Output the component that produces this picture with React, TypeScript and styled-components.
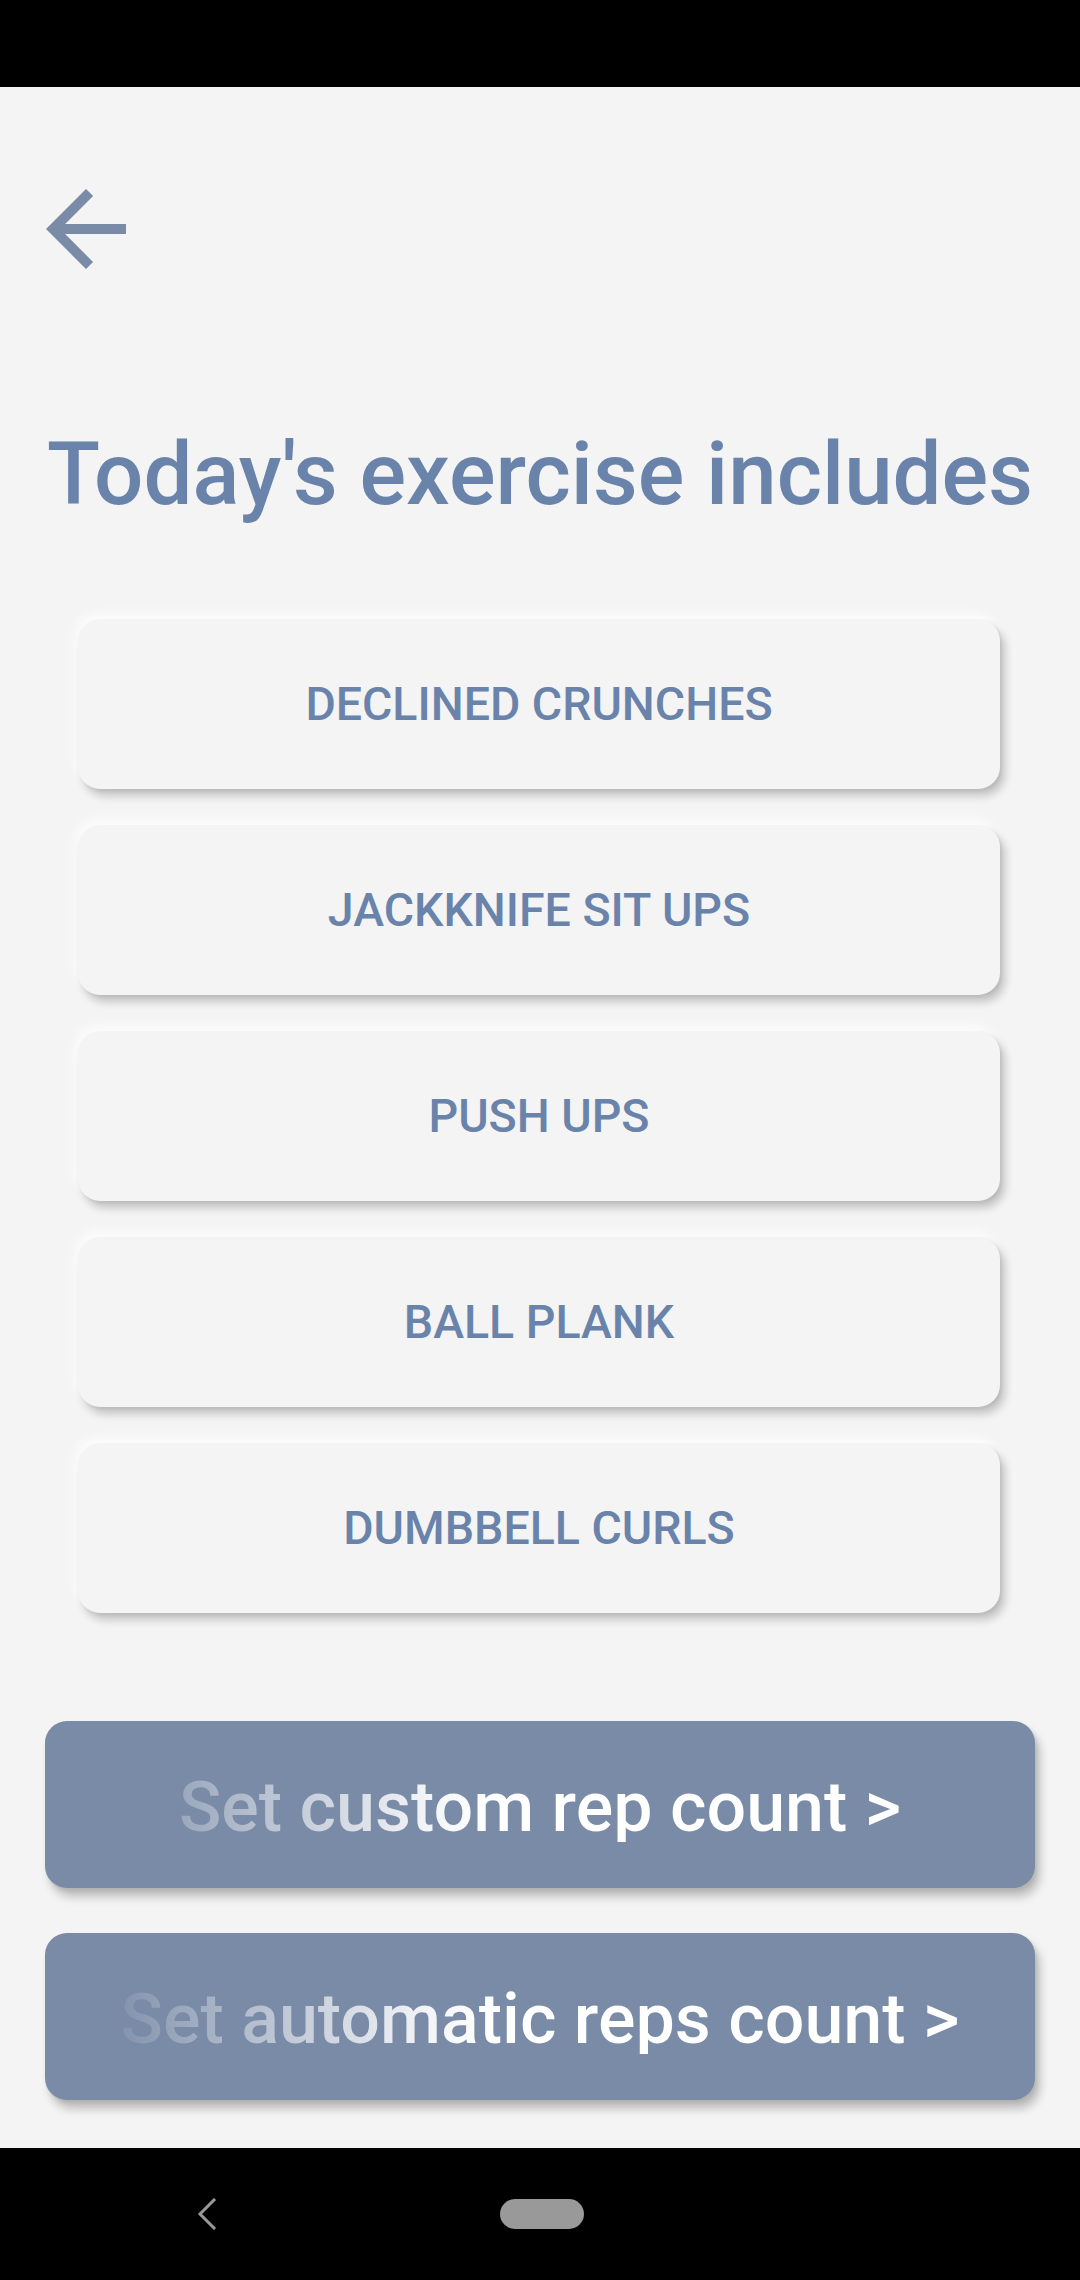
import React from "react";
import styled, { createGlobalStyle } from "styled-components";

const GlobalStyle = createGlobalStyle`
  html, body {
    margin: 0;
    padding: 0;
    background: #000;
  }
  * { box-sizing: border-box; }
  body {
    font-family: Roboto, "Noto Sans", "Liberation Sans", sans-serif;
  }
`;

const Screen = styled.div`
  width: 1080px;
  height: 2280px;
  display: flex;
  flex-direction: column;
  background: #f4f4f4;
  overflow: hidden;
`;

const StatusBar = styled.div`
  height: 87px;
  flex: none;
  background: #000;
`;

const Main = styled.main`
  flex: 1;
  display: flex;
  flex-direction: column;
  background: #f4f4f4;
`;

const BackButton = styled.button`
  width: 120px;
  height: 120px;
  margin: 82px 0 0 26px;
  padding: 0;
  border: none;
  background: transparent;
  display: flex;
  align-items: center;
  justify-content: center;
  cursor: pointer;
`;

const Title = styled.h1`
  margin: 142px 0 0 47px;
  font-size: 87px;
  line-height: 86px;
  font-weight: 500;
  color: #6983ab;
  white-space: nowrap;
`;

const ExerciseList = styled.ul`
  list-style: none;
  margin: 102px 80px 0 78px;
  padding: 0;
  display: flex;
  flex-direction: column;
  gap: 36px;
`;

const ExerciseCard = styled.li`
  height: 170px;
  border-radius: 22px;
  background: #f4f4f4;
  display: flex;
  align-items: center;
  justify-content: center;
  font-size: 46.5px;
  font-weight: 500;
  color: #6983ab;
  box-shadow: 5px 7px 9px rgba(0, 0, 0, 0.2), 2px 2px 3px rgba(0, 0, 0, 0.06),
    -3px -6px 12px rgba(255, 255, 255, 0.75);
`;

const Actions = styled.div`
  margin: 108px 45px 0 45px;
  display: flex;
  flex-direction: column;
  gap: 45px;
`;

const ActionButton = styled.button`
  height: 167px;
  border: none;
  border-radius: 22px;
  background: #7a8ba7;
  padding: 0;
  display: flex;
  align-items: center;
  cursor: pointer;
  box-shadow: 5px 9px 10px rgba(0, 0, 0, 0.22), 2px 3px 4px rgba(0, 0, 0, 0.08);
`;

const ActionLabel = styled.span`
  display: block;
  width: 100%;
  text-align: center;
  font-family: Roboto, "Noto Sans", "Liberation Sans", sans-serif;
  font-size: 70px;
  font-weight: 500;
  line-height: 1;
  padding-top: 5px;
  color: transparent;
  background: linear-gradient(
    90deg,
    rgba(255, 255, 255, 0) 50px,
    rgba(255, 255, 255, 0.25) 135px,
    rgba(255, 255, 255, 0.6) 265px,
    rgba(255, 255, 255, 0.9) 380px,
    #ffffff 440px
  );
  -webkit-background-clip: text;
  background-clip: text;
`;

const NavBar = styled.nav`
  height: 132px;
  flex: none;
  background: #000;
  display: flex;
  align-items: center;
  padding-left: 197px;
`;

const HomePill = styled.div`
  width: 84px;
  height: 30px;
  border-radius: 15px;
  background: #999999;
  margin-left: 283px;
`;

const exercises = [
  "DECLINED CRUNCHES",
  "JACKKNIFE SIT UPS",
  "PUSH UPS",
  "BALL PLANK",
  "DUMBBELL CURLS",
];

export default function App() {
  return (
    <>
      <GlobalStyle />
      <Screen>
        <StatusBar />
        <Main>
          <BackButton aria-label="Back">
            <svg width="120" height="120" viewBox="0 0 24 24">
              <path
                d="M20 11H7.83l5.59-5.59L12 4l-8 8 8 8 1.41-1.41L7.83 13H20v-2z"
                fill="#7a8ba8"
              />
            </svg>
          </BackButton>
          <Title>Today's exercise includes</Title>
          <ExerciseList>
            {exercises.map((e) => (
              <ExerciseCard key={e}>{e}</ExerciseCard>
            ))}
          </ExerciseList>
          <Actions>
            <ActionButton>
              <ActionLabel>Set custom rep count &gt;</ActionLabel>
            </ActionButton>
            <ActionButton>
              <ActionLabel>Set automatic reps count &gt;</ActionLabel>
            </ActionButton>
          </Actions>
        </Main>
        <NavBar>
          <svg width="20" height="32" viewBox="0 0 20 32">
            <path d="M18 1 L3 16 L18 31" fill="none" stroke="#999" strokeWidth="3" />
          </svg>
          <HomePill />
        </NavBar>
      </Screen>
    </>
  );
}
